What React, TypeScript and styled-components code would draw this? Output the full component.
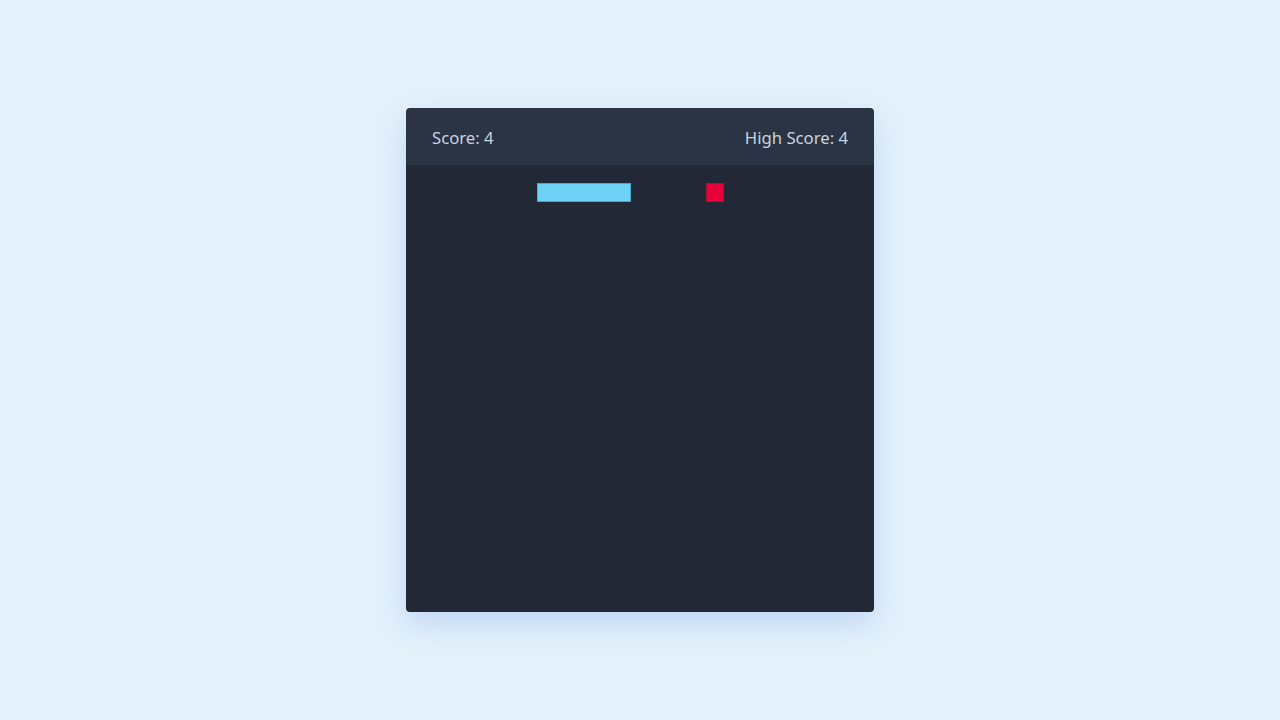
import React from "react";
import styled, { createGlobalStyle } from "styled-components";

const Global = createGlobalStyle`
  html, body { margin: 0; padding: 0; }
  body {
    background: #e3f1fb;
    font-family: "Noto Sans", "Open Sans", sans-serif;
  }
`;

const Page = styled.div`
  width: 1280px;
  height: 720px;
  display: flex;
  align-items: center;
  justify-content: center;
`;

const Card = styled.div`
  width: 468px;
  display: flex;
  flex-direction: column;
  border-radius: 4px;
  overflow: hidden;
  box-shadow: 0 12px 28px rgba(110, 150, 230, 0.28);
`;

const Header = styled.div`
  height: 57px;
  box-sizing: border-box;
  padding: 2px 26px 0;
  display: flex;
  align-items: center;
  justify-content: space-between;
  background: #2a3444;
  color: #c9d3df;
  font-size: 16.7px;
`;

const Board = styled.div`
  position: relative;
  height: 447px;
  background: #222836;
`;

const CELL = 468 / 25;

const Cell = styled.div<{ $food?: boolean }>`
  position: absolute;
  box-sizing: border-box;
  background: ${(p) => (p.$food ? "#e8023c" : "#6dd2f5")};
  border: 1px solid ${(p) => (p.$food ? "#b0102f" : "#4aa9cc")};
`;

const snake = [
  { x: 7, y: 1 },
  { x: 8, y: 1 },
  { x: 9, y: 1 },
  { x: 10, y: 1 },
  { x: 11, y: 1 },
];
const food = { x: 16, y: 1 };

export default function App() {
  const minX = Math.min(...snake.map((s) => s.x));
  const maxX = Math.max(...snake.map((s) => s.x));
  return (
    <Page>
      <Global />
      <Card>
        <Header>
          <span>Score: 4</span>
          <span>High Score: 4</span>
        </Header>
        <Board>
          <Cell
            style={{
              left: minX * CELL,
              top: snake[0].y * CELL - 0.7,
              width: (maxX - minX + 1) * CELL + 0.4,
              height: 18.7,
            }}
          />
          <Cell
            $food
            style={{
              left: food.x * CELL,
              top: food.y * CELL - 0.7,
              width: CELL,
              height: 18.7,
            }}
          />
        </Board>
      </Card>
    </Page>
  );
}
